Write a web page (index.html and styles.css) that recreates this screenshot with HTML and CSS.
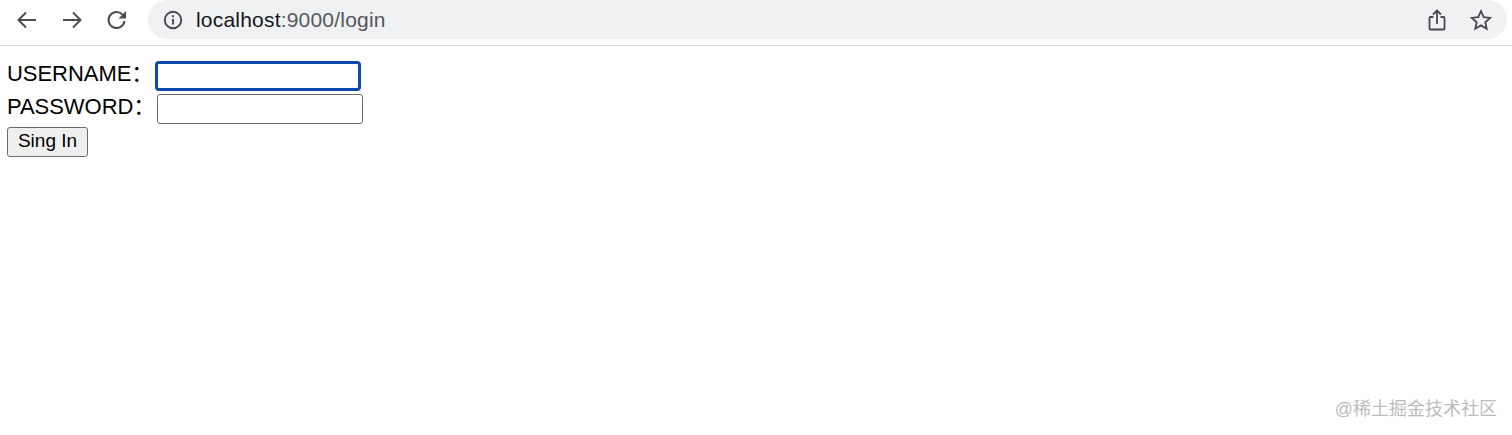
FILE: index.html
```html
<!DOCTYPE html>
<html lang="zh-CN">
<head>
    <meta charset="UTF-8">
    <title>login</title>
    <link rel="stylesheet" href="styles.css">
</head>
<body>
    <div class="toolbar">
        <div class="nav-buttons">
            <svg class="nav-icon" viewBox="0 0 24 24"><path d="M21 12H4M11 4.500L3.500 12l7.500 7.500"/></svg>
            <svg class="nav-icon" viewBox="0 0 24 24"><path d="M3 12h17M13 4.500l7.500 7.500-7.500 7.500"/></svg>
            <svg class="nav-icon" viewBox="0 0 24 24"><path d="M19.500 13a8 8 0 1 1-2.200-6.600L20 9"/><path class="solid" d="M21 3v7.500h-7.500z"/></svg>
        </div>
        <div class="omnibox">
            <svg class="info-icon" viewBox="0 0 20 20"><circle cx="10" cy="10" r="8.200"/><path d="M10 9v5.500"/><path d="M10 5.200v2"/></svg>
            <span class="url"><span class="host">localhost</span>:9000/login</span>
            <svg class="action-icon share" viewBox="0 0 20 24"><path d="M6.500 9H3.500a1 1 0 0 0-1 1v10.500a1 1 0 0 0 1 1h13a1 1 0 0 0 1-1V10a1 1 0 0 0-1-1h-3"/><path d="M10 16V3M6 6.500L10 2.500l4 4"/></svg>
            <svg class="action-icon star" viewBox="0 0 24 24"><path d="M12 3.200l2.700 6 6.500.7-4.900 4.400 1.400 6.400-5.700-3.300-5.700 3.300 1.400-6.400-4.900-4.400 6.500-.7z"/></svg>
        </div>
    </div>

    <form class="login-form">
        <div class="form-row">
            <label class="form-label label-user" for="username">USERNAME：</label>
            <input class="form-input is-focused" type="text" id="username">
        </div>
        <div class="form-row">
            <label class="form-label label-pass" for="password">PASSWORD：</label>
            <input class="form-input" type="password" id="password">
        </div>
        <button class="submit-btn" type="button">Sing In</button>
    </form>

    <div class="watermark">@稀土掘金技术社区</div>
</body>
</html>
```

FILE: styles.css
```css
html, body {
    height: 100%;
}
body {
    position: relative;
    margin: 0;
    overflow: hidden;
    background-color: #fff;
    color: #000;
    font-family: "Liberation Sans", "Noto Sans CJK SC", sans-serif;
}

.toolbar {
    display: flex;
    height: 45px;
    padding-right: 5px;
    border-bottom: 1px solid #d5d7d5;
}
.nav-buttons {
    display: flex;
    gap: 21px;
    align-items: center;
    width: 148px;
    height: 39px;
    padding-left: 15px;
    box-sizing: border-box;
}
.nav-icon {
    width: 24px;
    height: 24px;
    fill: none;
    stroke: #4a4c50;
    stroke-width: 2;
}
.nav-icon .solid {
    fill: #4a4c50;
    stroke: none;
}

.omnibox {
    flex: 1;
    display: flex;
    align-items: center;
    height: 39px;
    padding: 0 15px;
    border-radius: 20px;
    background-color: #eff1f3;
}
.info-icon {
    width: 20px;
    height: 20px;
    margin-right: 13px;
    fill: none;
    stroke: #45474b;
    stroke-width: 1.9;
}
.url {
    flex: 1;
    font-size: 21px;
    letter-spacing: 0.2px;
    color: #55585c;
}
.host {
    color: #15171a;
}
.action-icon {
    fill: none;
    stroke: #47494d;
    stroke-width: 1.8;
}
.share {
    width: 20px;
    height: 24px;
    margin: 0 22px 0 2px;
}
.star {
    width: 24px;
    height: 24px;
    margin-right: -1px;
}

.login-form {
    display: flex;
    flex-direction: column;
    align-items: flex-start;
    gap: 3px;
    padding: 15px 7px 0;
}
.form-row {
    display: flex;
    align-items: flex-start;
}
.form-label {
    font-size: 22px;
    line-height: 25px;
    letter-spacing: -0.05px;
    white-space: nowrap;
}
.label-user {
    width: 148px;
}
.label-pass {
    width: 150px;
}
.form-input {
    width: 206px;
    height: 30px;
    margin: 0;
    padding: 0 3px;
    box-sizing: border-box;
    border: 1px solid #6b6b6b;
    border-radius: 3px;
    background-color: #fff;
}
.is-focused {
    border: 3px solid #0f47b0;
    border-radius: 4px;
    outline: none;
}
.submit-btn {
    width: 81px;
    height: 30px;
    padding: 0 0 2px;
    border: 1px solid #6b6b6b;
    border-radius: 3px;
    background-color: #efefef;
    color: #000;
    font-family: inherit;
    font-size: 19px;
}

.watermark {
    position: absolute;
    right: 15px;
    bottom: 15px;
    font-size: 18px;
    color: #bcbcbc;
    white-space: nowrap;
}
```
